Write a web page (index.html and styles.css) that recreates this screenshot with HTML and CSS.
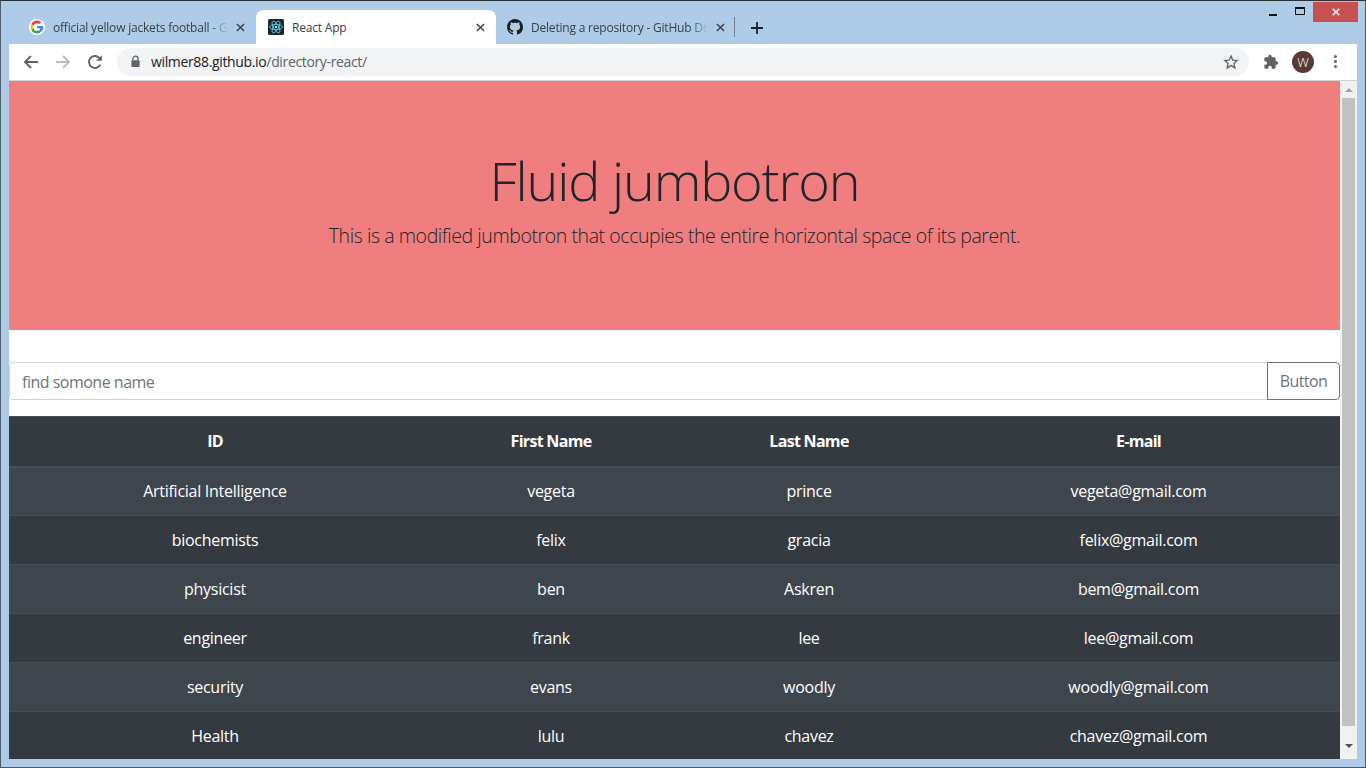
FILE: index.html
```html
<!DOCTYPE html>
<html lang="en">
<head>
<meta charset="utf-8">
<title>React App</title>
<link rel="stylesheet" href="styles.css">
</head>
<body>
<div class="window">
  <div class="tabstrip">
    <div class="tab tab-first">
      <svg class="favicon" viewBox="0 0 48 48"><circle cx="24" cy="24" r="24" fill="#fff"/><g transform="translate(4.8 4.8) scale(.8)"><path fill="#EA4335" d="M24 9.5c3.5 0 6.7 1.2 9.2 3.6l6.9-6.9C35.9 2.4 30.5 0 24 0 14.6 0 6.5 5.4 2.6 13.2l8 6.2C12.5 13.7 17.8 9.5 24 9.5z"/><path fill="#4285F4" d="M47 24.5c0-1.6-.1-3.1-.4-4.5H24v9h12.9c-.6 3-2.2 5.5-4.7 7.2l7.7 6C44.4 37.9 47 31.8 47 24.5z"/><path fill="#FBBC05" d="M10.5 28.6c-.5-1.4-.8-3-.8-4.6s.3-3.2.8-4.6l-8-6.2C.9 16.4 0 20.1 0 24s.9 7.6 2.6 10.8l7.9-6.2z"/><path fill="#34A853" d="M24 48c6.5 0 11.9-2.1 15.9-5.8l-7.7-6c-2.2 1.5-5 2.3-8.2 2.3-6.2 0-11.5-4.2-13.4-9.9l-8 6.2C6.5 42.6 14.6 48 24 48z"/></g></svg>
      <span class="tab-title">official yellow jackets football - Google Search</span>
      <svg class="tab-close" viewBox="0 0 10 10"><path d="M1 1l8 8M9 1l-8 8"/></svg>
    </div>
    <div class="tab tab-active">
      <svg class="favicon" viewBox="0 0 16 16"><rect width="16" height="16" rx="1.5" fill="#20232a"/><g fill="none" stroke="#61dafb" stroke-width=".8"><ellipse cx="8" cy="8" rx="6.5" ry="2.6"/><ellipse cx="8" cy="8" rx="6.5" ry="2.6" transform="rotate(60 8 8)"/><ellipse cx="8" cy="8" rx="6.5" ry="2.6" transform="rotate(120 8 8)"/></g><circle cx="8" cy="8" r="1.3" fill="#61dafb"/></svg>
      <span class="tab-title">React App</span>
      <svg class="tab-close" viewBox="0 0 10 10"><path d="M1 1l8 8M9 1l-8 8"/></svg>
    </div>
    <div class="tab tab-third">
      <svg class="favicon" viewBox="0 0 16 16"><path fill="#1b1f23" d="M8 0C3.58 0 0 3.58 0 8c0 3.54 2.29 6.53 5.47 7.59.4.07.55-.17.55-.38 0-.19-.01-.82-.01-1.49-2.01.37-2.53-.49-2.69-.94-.09-.23-.48-.94-.82-1.13-.28-.15-.68-.52-.01-.53.63-.01 1.08.58 1.23.82.72 1.21 1.87.87 2.33.66.07-.52.28-.87.51-1.07-1.78-.2-3.64-.89-3.64-3.95 0-.87.31-1.59.82-2.15-.08-.2-.36-1.02.08-2.12 0 0 .67-.21 2.2.82.64-.18 1.32-.27 2-.27s1.36.09 2 .27c1.53-1.04 2.2-.82 2.2-.82.44 1.1.16 1.92.08 2.12.51.56.82 1.27.82 2.15 0 3.07-1.87 3.75-3.65 3.95.29.25.54.73.54 1.48 0 1.07-.01 1.93-.01 2.2 0 .21.15.46.55.38A8.01 8.01 0 0 0 16 8c0-4.42-3.58-8-8-8z"/></svg>
      <span class="tab-title">Deleting a repository - GitHub Docs</span>
      <svg class="tab-close" viewBox="0 0 10 10"><path d="M1 1l8 8M9 1l-8 8"/></svg>
    </div>
    <span class="tab-divider"></span>
    <svg class="new-tab" viewBox="0 0 12 12"><path d="M6 0v12M0 6h12"/></svg>
    <div class="window-controls">
      <span class="win-btn"><span class="win-min"></span></span>
      <span class="win-btn"><span class="win-max"></span></span>
      <span class="win-close"><svg viewBox="0 0 10 10"><path d="M1 1l8 8M9 1l-8 8"/></svg></span>
    </div>
  </div>
  <div class="toolbar">
    <svg class="nav-icon" viewBox="0 0 16 16"><path d="M15 8H2M8 2L2 8l6 6"/></svg>
    <svg class="nav-icon nav-disabled" viewBox="0 0 16 16"><path d="M1 8h13M8 2l6 6-6 6"/></svg>
    <svg class="nav-icon nav-reload" viewBox="0 0 16 16"><path d="M13.4 10.6A6 6 0 1 1 12.3 3.8L14 5.5"/><path class="nav-fill" d="M14.8 1.2v5.6H9.2z"/></svg>
    <div class="omnibox">
      <svg class="lock" viewBox="0 0 12 14"><path d="M3.2 6V4a2.8 2.8 0 0 1 5.6 0v2" fill="none" stroke="#5f6368" stroke-width="1.4"/><rect x="1.5" y="5.6" width="9" height="7.4" rx="1" fill="#5f6368"/></svg>
      <span class="url"><span class="url-host">wilmer88.github.io</span>/directory-react/</span>
      <svg class="star" viewBox="0 0 24 24"><path d="M12 3.2l2.7 6.1 6.6.6-5 4.4 1.5 6.5-5.8-3.4-5.8 3.4 1.5-6.5-5-4.4 6.6-.6z"/></svg>
    </div>
    <svg class="puzzle" viewBox="0 0 24 24"><path fill="#5f6368" d="M20.5 11H19V7a2 2 0 0 0-2-2h-4V3.5a2.5 2.5 0 0 0-5 0V5H4a2 2 0 0 0-2 2v3.8h1.5a2.7 2.7 0 0 1 0 5.4H2V20a2 2 0 0 0 2 2h3.8v-1.5a2.7 2.7 0 0 1 5.4 0V22H17a2 2 0 0 0 2-2v-4h1.5a2.5 2.5 0 0 0 0-5z"/></svg>
    <span class="avatar">W</span>
    <span class="kebab"><i></i><i></i><i></i></span>
  </div>
  <div class="viewport">
    <main class="page">
      <section class="jumbotron">
        <h1 class="display">Fluid jumbotron</h1>
        <p class="lead">This is a modified jumbotron that occupies the entire horizontal space of its parent.</p>
      </section>
      <form class="search">
        <input class="search-input" type="text" placeholder="find somone name">
        <button class="search-btn" type="button">Button</button>
      </form>
      <table class="table">
        <colgroup><col class="col-id"><col class="col-first"><col class="col-last"><col class="col-mail"></colgroup>
        <thead><tr><th>ID</th><th>First Name</th><th>Last Name</th><th>E-mail</th></tr></thead>
        <tbody>
          <tr><td>Artificial Intelligence</td><td>vegeta</td><td>prince</td><td>vegeta@gmail.com</td></tr>
          <tr><td>biochemists</td><td>felix</td><td>gracia</td><td>felix@gmail.com</td></tr>
          <tr><td>physicist</td><td>ben</td><td>Askren</td><td>bem@gmail.com</td></tr>
          <tr><td>engineer</td><td>frank</td><td>lee</td><td>lee@gmail.com</td></tr>
          <tr><td>security</td><td>evans</td><td>woodly</td><td>woodly@gmail.com</td></tr>
          <tr><td>Health</td><td>lulu</td><td>chavez</td><td>chavez@gmail.com</td></tr>
        </tbody>
      </table>
    </main>
    <div class="scrollbar">
      <span class="arrow-up"></span>
      <span class="thumb"></span>
      <span class="arrow-down"></span>
    </div>
  </div>
</div>
</body>
</html>
```
FILE: styles.css
```css
* { box-sizing: border-box; }
html, body { margin: 0; height: 100%; overflow: hidden; }
body { font-family: "Open Sans", "Noto Sans", sans-serif; background: #fff; }
.window {
  height: 768px;
  display: flex;
  flex-direction: column;
  background: #aecbe8;
  border: 1px solid #4a5a6a;
  border-top-color: #2c3034;
  padding: 0 8px 8px;
}
.tabstrip { height: 43px; display: flex; align-items: flex-end; flex: none; padding-left: 7px; }
.tab {
  width: 240px;
  height: 34px;
  display: flex;
  align-items: center;
  padding: 0 8px 0 12px;
  gap: 8px;
  font-size: 12px;
  letter-spacing: -.2px;
  color: #3c4043;
  border-radius: 8px 8px 0 0;
}
.tab-first { padding-left: 13px; }
.tab-third { padding-left: 11px; }
.tab-active { background: #fff; }
.favicon { width: 16px; height: 16px; flex: none; }
.tab-title {
  flex: 1;
  min-width: 0;
  white-space: nowrap;
  overflow: hidden;
  mask-image: linear-gradient(to left, transparent 0, #000 18px);
}
.tab-active .tab-title { mask-image: none; }
.tab-close { width: 9px; height: 9px; flex: none; margin-right: 3px; fill: none; stroke: #3c4043; stroke-width: 1.6; }
.tab-divider { width: 1px; height: 20px; background: #6f8090; margin: 0 0 7px -2px; flex: none; align-self: flex-end; }
.new-tab { width: 12px; height: 12px; margin: 0 0 10px 16px; fill: none; stroke: #202124; stroke-width: 1.8; flex: none; }
.window-controls { margin: 1px -1px 0 auto; align-self: flex-start; display: flex; height: 20px; }
.win-btn { width: 27px; display: flex; align-items: center; justify-content: center; }
.win-min { width: 8px; height: 2px; background: #111; margin-top: 5px; }
.win-max { width: 10px; height: 8px; border: 1px solid #111; border-top-width: 2px; margin-top: -3px; }
.win-close { width: 45px; height: 20px; background: #c75050; display: flex; align-items: center; justify-content: center; }
.win-close svg { width: 8px; height: 8px; fill: none; stroke: #fff; stroke-width: 1.8; }
.toolbar {
  height: 37px;
  flex: none;
  background: #fff;
  border-bottom: 1px solid #d0d3d6;
  display: flex;
  align-items: center;
  padding: 0 20px 1px 14px;
}
.nav-icon { width: 16px; height: 16px; margin-right: 16px; fill: none; stroke: #5f6368; stroke-width: 1.9; flex: none; }
.nav-reload { margin-right: 14px; }
.nav-disabled { stroke: #babcbe; }
.nav-fill { fill: #5f6368; stroke: none; }
.omnibox {
  flex: 1;
  height: 28px;
  margin-right: 14px;
  padding: 0 10px 0 13px;
  border-radius: 14px;
  background: #f1f3f4;
  display: flex;
  align-items: center;
  font-size: 14px;
  letter-spacing: -.35px;
  color: #5f6368;
}
.lock { width: 11px; height: 13px; margin-right: 10px; flex: none; }
.url { flex: 1; white-space: nowrap; }
.url-host { color: #202124; }
.star { width: 16px; height: 16px; fill: none; stroke: #5f6368; stroke-width: 2; flex: none; }
.puzzle { width: 16px; height: 16px; flex: none; }
.avatar {
  width: 22px; height: 22px;
  margin-left: 13px;
  border-radius: 50%;
  background: #5a3a33;
  color: #fff;
  font-size: 13px;
  font-weight: 300;
  display: flex; align-items: center; justify-content: center;
  flex: none;
}
.kebab { margin-left: 20px; display: flex; flex-direction: column; gap: 2px; flex: none; }
.kebab i { width: 3px; height: 3px; border-radius: 50%; background: #5f6368; }
.viewport { flex: 1; min-height: 0; display: flex; }
.page { flex: 1; min-width: 0; background: #fff; overflow: hidden; }
.jumbotron {
  height: 249px;
  background: #f17e7e;
  color: #212529;
  text-align: center;
  display: flex;
  flex-direction: column;
  align-items: center;
  padding-top: 67px;
}
.display { margin: 0; font-size: 54px; font-weight: 300; letter-spacing: -1.2px; line-height: 65px; }
.lead { margin: 8px 0 0; font-size: 19.5px; font-weight: 300; letter-spacing: -.42px; line-height: 30px; }
.search { display: flex; margin: 32px 0 16px; height: 38px; }
.search-input {
  flex: 1;
  min-width: 0;
  border: 1px solid #ced4da;
  border-radius: 4px 0 0 4px;
  padding: 7px 12px 5px;
  font: inherit;
  font-size: 16px;
  letter-spacing: -.5px;
  color: #495057;
}
.search-input::placeholder { color: #6c757d; opacity: 1; }
.search-btn {
  width: 73px;
  margin-left: -1px;
  border: 1px solid #6c757d;
  border-radius: 0 4px 4px 0;
  background: #fff;
  color: #6c757d;
  font: inherit;
  font-size: 16px;
  letter-spacing: -.6px;
  padding: 0;
}
.table { width: 100%; border-collapse: collapse; table-layout: fixed; background: #343a40; color: #fff; font-size: 16px; letter-spacing: -.27px; text-align: center; }
.col-id { width: 412px; }
.col-first { width: 260px; }
.col-last { width: 256px; }
.table th { height: 50px; font-weight: 700; letter-spacing: -.7px; border-top: 1px solid #454d55; border-bottom: 2px solid #454d55; padding: 0; }
.table td { height: 49px; border-top: 1px solid #454d55; padding: 0; }
.table tbody tr:nth-child(odd) { background: #3f454c; }
.scrollbar { width: 17px; flex: none; background: #f1f1f1; display: flex; flex-direction: column; align-items: center; }
.arrow-up { width: 0; height: 0; margin: 7px 0 6px; border: 4px solid transparent; border-top: 0; border-bottom: 4px solid #a3a3a3; }
.thumb { width: 13px; height: 628px; background: #c1c1c1; }
.arrow-down { width: 0; height: 0; margin-top: 18px; border: 4px solid transparent; border-bottom: 0; border-top: 4px solid #505050; }
```
